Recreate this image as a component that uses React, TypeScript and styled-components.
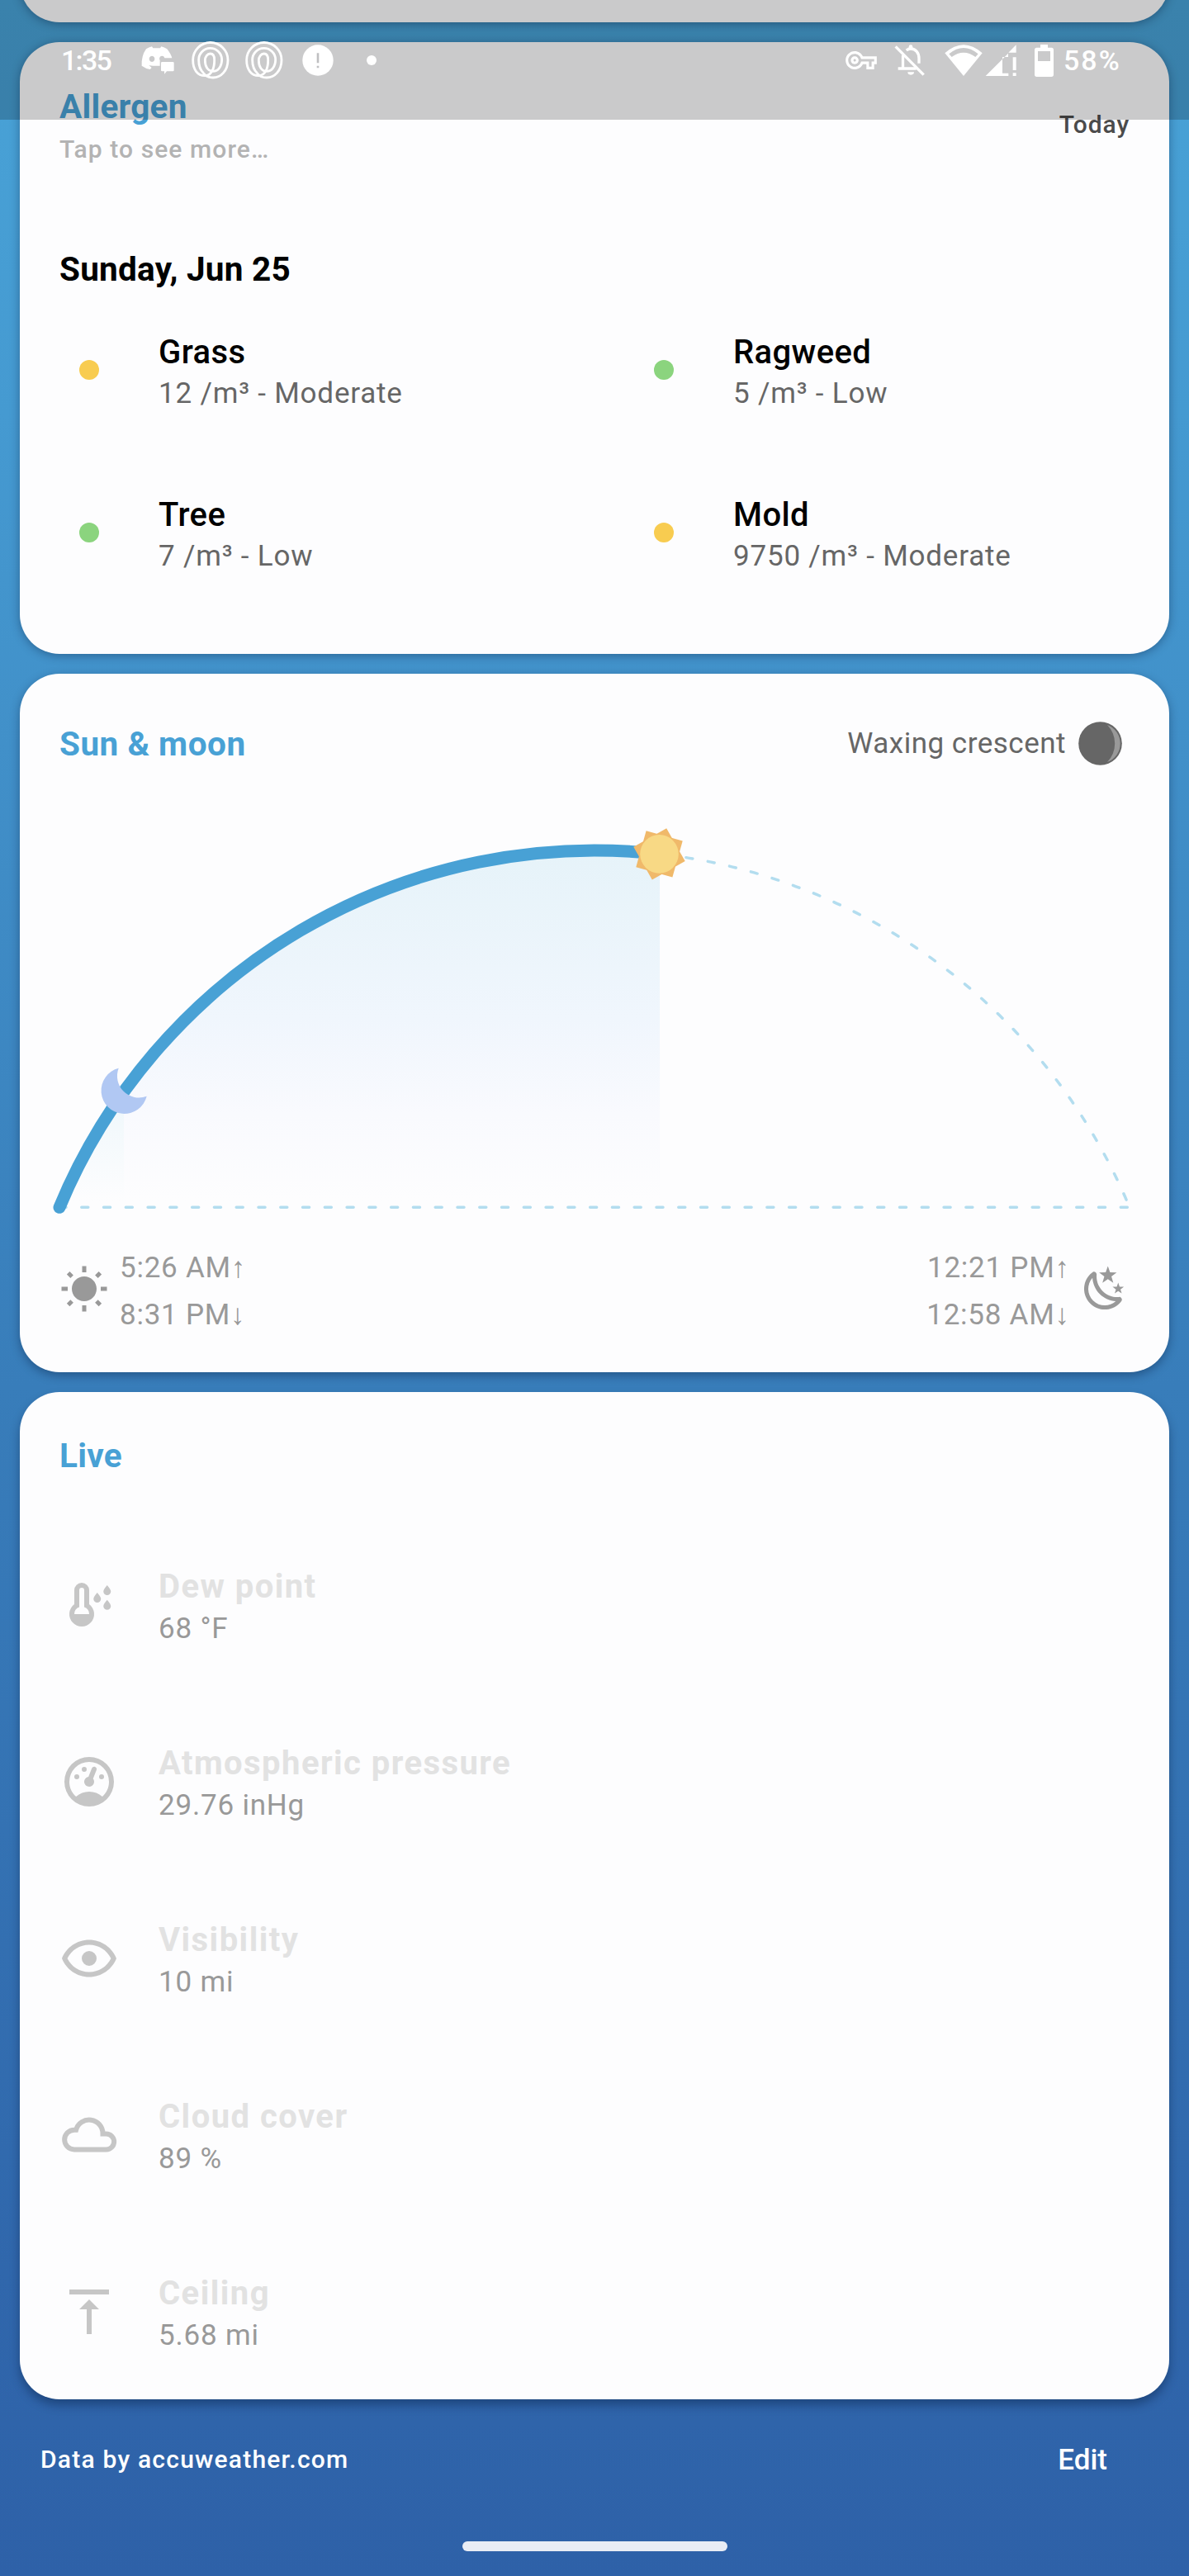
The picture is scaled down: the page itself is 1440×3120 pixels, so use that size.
import React from 'react';
import styled, { createGlobalStyle } from 'styled-components';

const GlobalStyle = createGlobalStyle`
  *, *::before, *::after { box-sizing: border-box; }
  body { margin: 0; background: #2e61a8; }
`;

const accent = '#48a1d5';

const Screen = styled.div`
  position: relative;
  display: flex;
  flex-direction: column;
  width: 1440px;
  height: 3120px;
  overflow: hidden;
  font-family: Roboto, 'Liberation Sans', sans-serif;
  background: linear-gradient(
    #49a3d7 0px,
    #459ad1 500px,
    #4190c9 900px,
    #387dba 1680px,
    #3067ac 2750px,
    #2e61a8 3120px
  );
`;

const StatusBar = styled.header`
  position: absolute;
  inset: 0 0 auto 0;
  height: 145px;
  padding: 47px 80px 0 74px;
  display: flex;
  align-items: flex-start;
  justify-content: space-between;
  background: rgba(0, 0, 0, 0.2);
`;

const StatusGroup = styled.div`
  display: flex;
  align-items: center;
  height: 52px;
`;

const StatusText = styled.span<{ $w: number; $ls: number; $gap?: number }>`
  width: ${(p) => p.$w}px;
  margin-left: ${(p) => p.$gap ?? 0}px;
  white-space: nowrap;
  font-size: 34px;
  line-height: 50px;
  font-weight: 500;
  letter-spacing: ${(p) => p.$ls}px;
  color: #fff;
`;

const StatusIcon = styled.svg<{ $gap: number }>`
  display: block;
  flex: none;
  margin-left: ${(p) => p.$gap}px;
  fill: #fff;
`;

const Stack = styled.main`
  display: flex;
  flex-direction: column;
  gap: 24px;
  margin-top: -73px;
  padding: 0 24px;
`;

const Card = styled.section<{ $h: number; $depth?: number }>`
  display: flex;
  flex-direction: column;
  flex: none;
  height: ${(p) => p.$h}px;
  border-radius: 48px;
  background: #fdfdfe;
  box-shadow: 0 ${(p) => p.$depth ?? 2}px 12px rgba(0, 20, 50, 0.36);
`;

const CardHeader = styled.div<{ $top: number; $h: number }>`
  display: flex;
  align-items: center;
  justify-content: space-between;
  height: ${(p) => p.$h}px;
  margin-top: ${(p) => p.$top}px;
  padding: 0 48px;
`;

const Title = styled.h2<{ $ls?: number }>`
  margin: 0;
  font-size: 40.5px;
  line-height: 48px;
  font-weight: 700;
  letter-spacing: ${(p) => p.$ls ?? 0.25}px;
  color: ${accent};
`;

const Hint = styled.p`
  margin: 10px 0 0;
  font-size: 30px;
  line-height: 36px;
  font-weight: 500;
  letter-spacing: 1.1px;
  color: #b3b3b3;
`;

const Today = styled.span`
  margin-bottom: 2px;
  font-size: 30px;
  line-height: 36px;
  font-weight: 500;
  letter-spacing: 0.9px;
  color: #4b4b4b;
`;

const DateLine = styled.h3`
  margin: 103px 0 -1px;
  padding: 0 48px;
  font-size: 40.5px;
  line-height: 48px;
  font-weight: 700;
  letter-spacing: 0.25px;
  color: #000;
`;

const AllergenGrid = styled.div`
  display: grid;
  grid-template-columns: 1fr 1fr;
  grid-auto-rows: 197px;
`;

const Item = styled.div<{ $h?: number }>`
  display: flex;
  align-items: center;
  gap: 48px;
  height: ${(p) => p.$h ?? 197}px;
  padding-left: 48px;
`;

const IconBox = styled.div`
  display: flex;
  align-items: center;
  justify-content: center;
  width: 72px;
  height: 72px;
`;

const Dot = styled.span<{ $c: string }>`
  width: 24px;
  height: 24px;
  border-radius: 50%;
  background: ${(p) => p.$c};
`;

const ItemText = styled.div<{ $top: number; $gap: number }>`
  display: flex;
  flex-direction: column;
  gap: ${(p) => p.$gap}px;
  padding-top: ${(p) => p.$top}px;
`;

const ItemName = styled.span<{ $faded?: boolean }>`
  font-size: 40px;
  line-height: 48px;
  font-weight: ${(p) => (p.$faded ? 700 : 500)};
  letter-spacing: ${(p) => (p.$faded ? 1.45 : 0.4)}px;
  color: ${(p) => (p.$faded ? '#e2e2e2' : '#000')};
`;

const ItemValue = styled.span<{ $c: string }>`
  font-size: 35px;
  line-height: 42px;
  letter-spacing: 0.8px;
  color: ${(p) => p.$c};
`;

const Phase = styled.div`
  display: flex;
  align-items: center;
  gap: 15px;
  margin-right: 9px;
  font-size: 35px;
  line-height: 42px;
  letter-spacing: 0.5px;
  color: #666;
`;

const PhaseIcon = styled.svg`
  display: block;
  width: 53px;
  height: 53px;
  margin-bottom: 2px;
`;

const Chart = styled.svg`
  display: block;
  width: 1392px;
  height: 500px;
  margin-top: 69px;
`;

const Times = styled.div`
  display: flex;
  justify-content: space-between;
  margin-top: 6px;
  padding: 0 48px;
`;

const TimeBlock = styled.div<{ $gap: number }>`
  display: flex;
  align-items: center;
  gap: ${(p) => p.$gap}px;
  height: 114px;
`;

const TimeLines = styled.div<{ $right?: boolean }>`
  display: flex;
  flex-direction: column;
  align-items: ${(p) => (p.$right ? 'flex-end' : 'flex-start')};
`;

const TimeLine = styled.span`
  height: 57px;
  font-size: 35px;
  line-height: 59px;
  letter-spacing: 0.75px;
  white-space: nowrap;
  color: #999;
`;

const Arrow = styled.span`
  font-family: 'Liberation Serif', serif;
  letter-spacing: 0;
`;

const SmallIcon = styled.svg`
  display: block;
  width: 60px;
  height: 60px;
  margin-bottom: 5px;
  fill: #999;
`;

const LiveIcon = styled.svg`
  display: block;
  width: 72px;
  height: 72px;
  fill: #c6c6c6;
`;

const LiveList = styled.div`
  margin-top: 50px;
`;

const Footer = styled.footer`
  display: flex;
  align-items: center;
  justify-content: space-between;
  height: 146px;
  padding: 0 99px 0 49px;
  color: #fff;
`;

const Credit = styled.span`
  margin-bottom: 2px;
  font-size: 30px;
  font-weight: 500;
  letter-spacing: 1.22px;
`;

const EditButton = styled.button`
  padding: 1px 0 0;
  border: 0;
  background: none;
  font: 500 35px/42px Roboto, sans-serif;
  color: #fff;
`;

const HomeBar = styled.div`
  align-self: center;
  width: 321px;
  height: 12px;
  margin-top: 26px;
  border-radius: 6px;
  background: #e9edf5;
`;

const LoopIcon = ({ gap }: { gap: number }) => (
  <StatusIcon $gap={gap} width={46} height={46} viewBox="518 62 138 138">
    <path
      d="M562 178C548 165 544 148 544 130A42 42 0 0 1 628 128C628 155 613 171 596 171C578 171 567 155 567 132C567 117 576 107 586 107C597 107 601 118 601 130C601 158 592 187 566 187C540 187 523 165 523 130A63.500 63.500 0 0 1 650 130C650 168 625 194 596 194C580 194 568 187 562 178"
      fill="none"
      stroke="#fff"
      strokeWidth={8.5}
    />
  </StatusIcon>
);

const sunArc = 'M48 462.3A701.7 701.7 0 0 1 1344 462.3';

const SunMoonChart = () => (
  <Chart viewBox="0 0 1392 500">
    <defs>
      <linearGradient id="day" gradientUnits="userSpaceOnUse" x1="0" y1="30" x2="0" y2="455">
        <stop offset="0" stopColor="#e6f3f9" />
        <stop offset="0.48" stopColor="#f0f6fd" />
        <stop offset="0.75" stopColor="#f9fafe" />
        <stop offset="1" stopColor="#fdfdfe" />
      </linearGradient>
      <linearGradient id="night" gradientUnits="userSpaceOnUse" x1="0" y1="322" x2="0" y2="455">
        <stop offset="0" stopColor="#eef7fb" />
        <stop offset="1" stopColor="#fdfdfe" />
      </linearGradient>
    </defs>
    <path d="M48 462.3A701.7 701.7 0 0 1 775 34.400V462.300Z" fill="url(#day)" />
    <path d="M48 462.3A701.7 701.7 0 0 1 126 322.700V462.300Z" fill="url(#night)" />
    <g fill="none" stroke="#b3ddef" strokeWidth={3.5} strokeLinecap="round" strokeDasharray="8 18.777">
      <path d="M48 462.3H1344" />
      <path d={sunArc} />
    </g>
    <path d="M48 462.3A701.7 701.7 0 0 1 775 34.400" fill="none" stroke={accent} strokeWidth={15} strokeLinecap="round" />
    <path d="M119.7 293.8A28 28 0 1 0 153.7 327.8A26.3 26.3 0 0 1 119.7 293.8Z" fill="#b1c8f3" />
    <g transform="translate(774.5 34.400)">
      <g fill="#f0b96a">
        <rect x="-22.900" y="-22.900" width="45.800" height="45.800" transform="rotate(15.600)" />
        <rect x="-22.900" y="-22.900" width="45.800" height="45.800" transform="rotate(60.600)" />
      </g>
      <circle r="23.300" fill="#f8d985" />
    </g>
  </Chart>
);

const icons: Record<string, React.ReactNode> = {
  dew: (
    <>
      <path
        fillRule="evenodd"
        d="M12 11.670V6A3 3 0 0 0 6 6V11.670A5 5 0 1 0 12 11.670ZM6 15.670A3 3 0 0 1 8 12.840V6A1 1 0 0 1 10 6V12.840A3 3 0 0 1 12 15.670Z"
      />
      <path d="M15.25 7C14.35 8.100 13.75 8.850 13.75 9.500A1.500 1.500 0 0 0 16.750 9.500C16.750 8.850 16.150 8.100 15.250 7ZM19.250 4C18.350 5.100 17.750 5.850 17.750 6.500A1.500 1.500 0 0 0 20.750 6.500C20.750 5.850 20.150 5.100 19.250 4ZM19.250 9.900C18.350 11 17.750 11.750 17.750 12.400A1.500 1.500 0 0 0 20.750 12.400C20.750 11.750 20.150 11 19.250 9.900Z" />
    </>
  ),
  gauge: (
    <path d="M12,2A10,10 0 0,0 2,12A10,10 0 0,0 12,22A10,10 0 0,0 22,12A10,10 0 0,0 12,2M12,4A8,8 0 0,1 20,12C20,14.4 19,16.5 17.3,18C15.9,16.7 14,16 12,16C10,16 8.2,16.7 6.7,18C5,16.5 4,14.4 4,12A8,8 0 0,1 12,4M14,5.89C13.62,5.9 13.26,6.15 13.1,6.54L11.81,9.77L11.71,10C11,10.13 10.41,10.6 10.14,11.26C9.73,12.29 10.23,13.45 11.26,13.86C12.29,14.27 13.45,13.77 13.86,12.74C14.12,12.08 14,11.32 13.57,10.76L13.67,10.5L14.96,7.29L14.97,7.26C15.17,6.75 14.92,6.17 14.41,5.96C14.28,5.91 14.15,5.89 14,5.89M10,6A1,1 0 0,0 9,7A1,1 0 0,0 10,8A1,1 0 0,0 11,7A1,1 0 0,0 10,6M7,9A1,1 0 0,0 6,10A1,1 0 0,0 7,11A1,1 0 0,0 8,10A1,1 0 0,0 7,9M17,9A1,1 0 0,0 16,10A1,1 0 0,0 17,11A1,1 0 0,0 18,10A1,1 0 0,0 17,9Z" />
  ),
  eye: (
    <path d="M12,9A3,3 0 0,1 15,12A3,3 0 0,1 12,15A3,3 0 0,1 9,12A3,3 0 0,1 12,9M12,4.5C17,4.5 21.27,7.61 23,12C21.27,16.39 17,19.5 12,19.5C7,19.5 2.73,16.39 1,12C2.73,7.61 7,4.5 12,4.5M3.18,12C4.83,15.36 8.24,17.5 12,17.5C15.76,17.5 19.17,15.36 20.82,12C19.17,8.64 15.76,6.5 12,6.5C8.24,6.5 4.83,8.64 3.18,12Z" />
  ),
  cloud: (
    <path
      d="M6 17.800A3.950 3.950 0 0 1 6 9.900H6.700A5.500 5.500 0 0 1 17.500 11.400V11.500H18.900A3.150 3.150 0 0 1 18.900 17.800Z"
      fill="none"
      stroke="#c6c6c6"
      strokeWidth={2}
    />
  ),
  ceiling: <path d="M8 11h3v10h2V11h3l-4-4-4 4zM4 3v2h16V3H4z" />,
};

const allergens = [
  { name: 'Grass', value: '12 /m³ - Moderate', color: '#f8cc50' },
  { name: 'Ragweed', value: '5 /m³ - Low', color: '#8bd47e' },
  { name: 'Tree', value: '7 /m³ - Low', color: '#8bd47e' },
  { name: 'Mold', value: '9750 /m³ - Moderate', color: '#f8cc50' },
];

const live = [
  { name: 'Dew point', value: '68 °F', icon: 'dew' },
  { name: 'Atmospheric pressure', value: '29.76 inHg', icon: 'gauge' },
  { name: 'Visibility', value: '10 mi', icon: 'eye' },
  { name: 'Cloud cover', value: '89 %', icon: 'cloud' },
  { name: 'Ceiling', value: '5.68 mi', icon: 'ceiling' },
];

export default function App() {
  return (
    <Screen>
      <GlobalStyle />
      <Stack>
        <Card $h={100} />
        <Card $h={741} $depth={2}>
          <CardHeader $top={53} $h={95}>
            <div>
              <Title>Allergen</Title>
              <Hint>Tap to see more…</Hint>
            </div>
            <Today>Today</Today>
          </CardHeader>
          <DateLine>Sunday, Jun 25</DateLine>
          <AllergenGrid>
            {allergens.map((a) => (
              <Item key={a.name}>
                <IconBox>
                  <Dot $c={a.color} />
                </IconBox>
                <ItemText $top={6} $gap={5}>
                  <ItemName>{a.name}</ItemName>
                  <ItemValue $c="#666">{a.value}</ItemValue>
                </ItemText>
              </Item>
            ))}
          </AllergenGrid>
        </Card>

        <Card $h={846} $depth={4}>
          <CardHeader $top={55} $h={60}>
            <Title $ls={0.5}>Sun &amp; moon</Title>
            <Phase>
              Waxing crescent
              <PhaseIcon viewBox="-26.500 -26.500 53 53">
                <circle r="26.300" fill="#666" />
                <path d="M8.500 -22.600A24.100 24.100 0 0 1 8.500 22.600A32.400 32.400 0 0 0 8.500 -22.600Z" fill="#999" />
              </PhaseIcon>
            </Phase>
          </CardHeader>
          <SunMoonChart />
          <Times>
            <TimeBlock $gap={13}>
              <SmallIcon viewBox="0 0 24 24">
                <path d="M3.55 19.09L4.96 20.5L6.76 18.71L5.34 17.29M12 6C8.69 6 6 8.69 6 12S8.69 18 12 18 18 15.31 18 12C18 8.68 15.31 6 12 6M20 13H23V11H20M17.24 18.71L19.04 20.5L20.45 19.09L18.66 17.29M20.45 5L19.04 3.6L17.24 5.39L18.66 6.81M13 1H11V4H13M6.76 5.39L4.96 3.6L3.55 5L5.34 6.81L6.76 5.39M1 13H4V11H1M13 20H11V23H13" />
              </SmallIcon>
              <TimeLines>
                <TimeLine>5:26 AM<Arrow>↑</Arrow></TimeLine>
                <TimeLine>8:31 PM<Arrow>↓</Arrow></TimeLine>
              </TimeLines>
            </TimeBlock>
            <TimeBlock $gap={13}>
              <TimeLines $right>
                <TimeLine>12:21 PM<Arrow>↑</Arrow></TimeLine>
                <TimeLine>12:58 AM<Arrow>↓</Arrow></TimeLine>
              </TimeLines>
              <SmallIcon viewBox="0 0 24 24">
                <path d="M17.75,4.09L15.22,6.03L16.13,9.09L13.5,7.28L10.87,9.09L11.78,6.03L9.25,4.09L12.44,4L13.5,1L14.56,4L17.75,4.09M21.25,11L19.61,12.25L20.2,14.23L18.5,13.06L16.8,14.23L17.39,12.25L15.75,11L17.81,10.95L18.5,9L19.19,10.95L21.25,11M18.97,15.95C19.8,15.87 20.69,17.05 20.16,17.8C19.84,18.25 19.5,18.67 19.08,19.07C15.17,23 8.84,23 4.94,19.07C1.03,15.17 1.03,8.83 4.94,4.93C5.34,4.53 5.76,4.17 6.21,3.85C6.96,3.32 8.14,4.21 8.06,5.04C7.79,7.9 8.75,10.87 10.95,13.06C13.14,15.26 16.1,16.22 18.97,15.95M17.33,17.97C14.5,17.81 11.7,16.64 9.53,14.5C7.36,12.31 6.2,9.5 6.04,6.68C3.23,9.82 3.34,14.64 6.35,17.66C9.37,20.67 14.19,20.78 17.33,17.97Z" />
              </SmallIcon>
            </TimeBlock>
          </Times>
        </Card>

        <Card $h={1220} $depth={7}>
          <CardHeader $top={53} $h={48}>
            <Title>Live</Title>
          </CardHeader>
          <LiveList>
            {live.map((l) => (
              <Item key={l.name} $h={214}>
                <LiveIcon viewBox="0 0 24 24">{icons[l.icon]}</LiveIcon>
                <ItemText $top={3} $gap={6}>
                  <ItemName $faded>{l.name}</ItemName>
                  <ItemValue $c="#999">{l.value}</ItemValue>
                </ItemText>
              </Item>
            ))}
          </LiveList>
        </Card>
      </Stack>

      <Footer>
        <Credit>Data by accuweather.com</Credit>
        <EditButton>Edit</EditButton>
      </Footer>
      <HomeBar />

      <StatusBar>
        <StatusGroup>
          <StatusText $w={62} $ls={-1.7}>1:35</StatusText>
          <StatusIcon $gap={35} width={40} height={34} viewBox="334 87 120 102">
            <path
              fillRule="evenodd"
              d="M352 97Q362 91 373 88L377 94H403L407 88Q418 91 428 97Q442 115 446 130H419A9.500 10 0 1 0 402 138V158H378Q369 158 362 156L372 165L366 171Q350 168 336 158Q334 122 352 97ZM373 122A10 11 0 1 0 373.100 122Z"
            />
            <path d="M410 144H449Q453 144 453 148V174Q453 178 449 178H427L418 188V178H410Q406 178 406 174V148Q406 144 410 144Z" />
          </StatusIcon>
          <LoopIcon gap={21} />
          <LoopIcon gap={19} />
          <StatusIcon $gap={23} width={38} height={38} viewBox="-19 -19 38 38">
            <circle r="18.700" />
            <path d="M-1.300 -8.700H1.300V3.300H-1.300ZM-1.300 6.700H1.300V9.300H-1.300Z" fill="#bfbfc1" />
          </StatusIcon>
          <StatusIcon $gap={40} width={12} height={12} viewBox="0 0 12 12">
            <circle cx="6" cy="6" r="6" />
          </StatusIcon>
        </StatusGroup>
        <StatusGroup>
          <StatusIcon $gap={0} width={38} height={22} viewBox="0 5 24 14">
            <path d="M22 19h-6v-4h-2.68c-1.14 2.42-3.6 4-6.32 4-3.86 0-7-3.14-7-7s3.14-7 7-7c2.72 0 5.17 1.58 6.32 4H24v6h-2v4zm-4-2h2v-4h2v-2H11.94l-.23-.67C11.01 8.34 9.11 7 7 7c-2.76 0-5 2.24-5 5s2.24 5 5 5c2.11 0 4.01-1.34 4.71-3.33l.23-.67H18v4zM7 15c-1.65 0-3-1.35-3-3s1.35-3 3-3 3 1.35 3 3-1.35 3-3 3zm0-4c-.55 0-1 .45-1 1s.45 1 1 1 1-.45 1-1-.45-1-1-1z" />
          </StatusIcon>
          <StatusIcon $gap={21} width={38} height={38} viewBox="246 74 114 114">
            <g fill="none" stroke="#fff" strokeWidth={10}>
              <path d="M251 81L353 184" />
              <path d="M277.500 112V161M260 161H326" />
              <path d="M290 95Q298 89 306 89C324 89 336 104 336 124V142" />
            </g>
            <path d="M299 92V82A7 7 0 0 1 313 82V92ZM295 174H318A11.500 10 0 0 1 295 174Z" />
          </StatusIcon>
          <StatusIcon $gap={23} width={46} height={38} viewBox="430 70 138 114">
            <path
              fillRule="evenodd"
              d="M431 101Q499 41 567 101L499 184ZM446 104L456 115Q499 83 542 115L552 104Q499 60 446 104Z"
            />
          </StatusIcon>
          <StatusIcon $gap={3} width={38} height={38.7} viewBox="578 70 114 116">
            <path d="M578 186L662 102V115H641V174H663V186ZM691 71V99H663ZM679 116H691V163H679ZM679 173H691V186H679Z" />
          </StatusIcon>
          <StatusIcon $gap={22} width={23} height={39} viewBox="756 69 69 117">
            <path
              fillRule="evenodd"
              d="M777 69H804V80H817Q825 80 825 88V178Q825 186 817 186H764Q756 186 756 178V88Q756 80 764 80H777ZM768 93V129H813V93Z"
            />
          </StatusIcon>
          <StatusText $gap={12} $w={72} $ls={2}>58%</StatusText>
        </StatusGroup>
      </StatusBar>
    </Screen>
  );
}
